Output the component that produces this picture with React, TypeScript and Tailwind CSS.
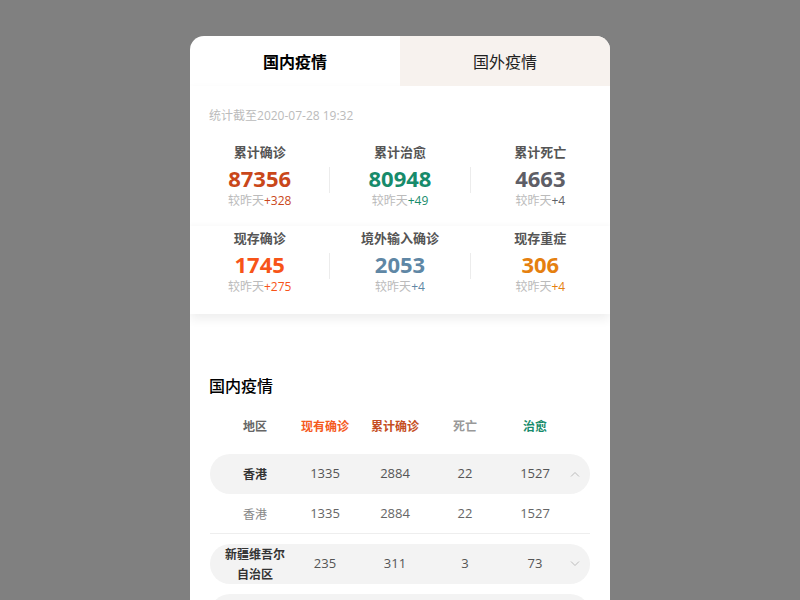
import React from "react";

const font = { fontFamily: '"Noto Sans CJK SC", "Noto Sans", sans-serif' };
const num = "font-['Open_Sans','Noto_Sans_CJK_SC',sans-serif]";

type Stat = { label: string; value: string; diff: string; color: string };

const row1: Stat[] = [
  { label: "累计确诊", value: "87356", diff: "+328", color: "text-[#c9471a]" },
  { label: "累计治愈", value: "80948", diff: "+49", color: "text-[#178b6b]" },
  { label: "累计死亡", value: "4663", diff: "+4", color: "text-[#5e5e66]" },
];

const row2: Stat[] = [
  { label: "现存确诊", value: "1745", diff: "+275", color: "text-[#f75418]" },
  { label: "境外输入确诊", value: "2053", diff: "+4", color: "text-[#5f87a5]" },
  { label: "现存重症", value: "306", diff: "+4", color: "text-[#e5800f]" },
];

function StatRow({ items, className }: { items: Stat[]; className?: string }) {
  return (
    <div className={"flex " + (className ?? "")}>
      {items.map((s, i) => (
        <React.Fragment key={s.label}>
          {i > 0 && <div className="w-px h-[26px] bg-[#ececec] self-end mb-[16px]" />}
          <div className="flex-1 flex flex-col items-center">
            <div className="text-[13px] leading-[18px] font-bold text-[#555]">{s.label}</div>
            <div className={"mt-[5px] text-[22px] leading-[24px] font-bold " + num + " " + s.color}>{s.value}</div>
            <div className="mt-[2px] text-xs leading-4">
              <span className="text-[#bbb]">较昨天</span>
              <span className={num + " " + s.color}>{s.diff}</span>
            </div>
          </div>
        </React.Fragment>
      ))}
    </div>
  );
}

function Chevron({ up }: { up?: boolean }) {
  return (
    <svg width="10" height="6" viewBox="0 0 10 6" fill="none" stroke="#bbb" strokeWidth="1">
      <polyline points={up ? "1,5.5 5,1.5 9,5.5" : "1,0.5 5,4.5 9,0.5"} />
    </svg>
  );
}

const cols = "w-[70px] text-center";
const ncols = cols + " " + num;

export default function App() {
  return (
    <div className="min-h-screen bg-[#808080] flex justify-center pt-9" style={font}>
      <div className="w-[420px] bg-white rounded-t-[14px] overflow-hidden">
        <div className="flex h-[50px]">
          <div className="flex-1 flex items-center justify-center text-base font-bold text-black">国内疫情</div>
          <div className="flex-1 flex items-center justify-center text-base text-[#222] bg-[#f7f2ee]">国外疫情</div>
        </div>

        <div className="shadow-[0_5px_10px_rgba(0,0,0,0.07)] pb-[19px]">
          <div className="px-[19px] pt-[21px] text-xs leading-4 text-[#bbb]">
            统计截至<span className={num}>2020-07-28 19:32</span>
          </div>
          <StatRow items={row1} className="pt-[19px] pb-[17px]" />
          <StatRow items={row2} className="pt-[3px] shadow-[0_-2px_4px_rgba(0,0,0,0.025)]" />
        </div>

        <div className="px-5 pt-[60px]">
          <div className="text-base leading-[22px] font-medium text-black -ml-px">国内疫情</div>
          <div className="mt-[22px] flex px-[10px] text-xs leading-4 font-bold">
            <div className={cols + " text-[#666]"}>地区</div>
            <div className={cols + " text-[#f55a1d]"}>现有确诊</div>
            <div className={cols + " text-[#c54d22]"}>累计确诊</div>
            <div className={cols + " text-[#999]"}>死亡</div>
            <div className={cols + " text-[#178b6b]"}>治愈</div>
          </div>

          <div className="mt-5 h-10 rounded-full bg-[#f3f3f3] flex items-center px-[10px] text-[13px] text-[#555]">
            <div className={cols + " text-xs font-bold text-[#333]"}>香港</div>
            <div className={ncols}>1335</div>
            <div className={ncols}>2884</div>
            <div className={ncols}>22</div>
            <div className={ncols}>1527</div>
            <div className="flex-1 flex justify-center"><Chevron up /></div>
          </div>
          <div className="h-[40px] flex items-center px-[10px] text-[13px] text-[#666] border-b border-[#eee]">
            <div className={cols + " text-xs text-[#888]"}>香港</div>
            <div className={ncols}>1335</div>
            <div className={ncols}>2884</div>
            <div className={ncols}>22</div>
            <div className={ncols}>1527</div>
          </div>

          <div className="mt-[10px] h-10 rounded-full bg-[#f3f3f3] flex items-center px-[10px] text-[13px] text-[#555]">
            <div className={cols + " text-xs leading-5 font-bold text-[#333]"}>新疆维吾尔自治区</div>
            <div className={ncols}>235</div>
            <div className={ncols}>311</div>
            <div className={ncols}>3</div>
            <div className={ncols}>73</div>
            <div className="flex-1 flex justify-center"><Chevron /></div>
          </div>
          <div className="mt-[10px] h-10 rounded-full bg-[#f3f3f3]" />
        </div>
      </div>
    </div>
  );
}
